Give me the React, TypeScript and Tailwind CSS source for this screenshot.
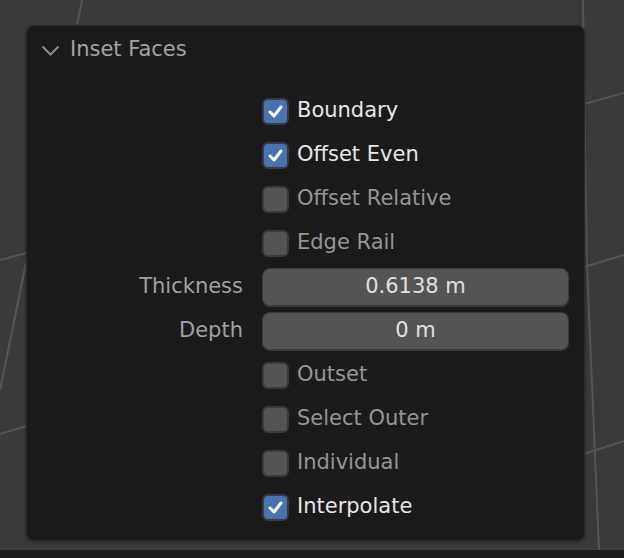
import React from 'react';

type Row =
  | { kind: 'check'; label: string; checked: boolean }
  | { kind: 'field'; label: string; value: string };

const rows: Row[] = [
  { kind: 'check', label: 'Boundary', checked: true },
  { kind: 'check', label: 'Offset Even', checked: true },
  { kind: 'check', label: 'Offset Relative', checked: false },
  { kind: 'check', label: 'Edge Rail', checked: false },
  { kind: 'field', label: 'Thickness', value: '0.6138 m' },
  { kind: 'field', label: 'Depth', value: '0 m' },
  { kind: 'check', label: 'Outset', checked: false },
  { kind: 'check', label: 'Select Outer', checked: false },
  { kind: 'check', label: 'Individual', checked: false },
  { kind: 'check', label: 'Interpolate', checked: true },
];

function Checkbox({ checked }: { checked: boolean }) {
  return (
    <div
      className={
        checked
          ? 'w-[27px] h-[27px] rounded-[6px] bg-[#4772b3] border-2 border-[#3a3a3a] flex items-center justify-center'
          : 'w-[27px] h-[27px] rounded-[6px] bg-[#545454] border-2 border-[#3a3a3a]'
      }
    >
      {checked && (
        <svg width="17" height="17" viewBox="0 0 17 17">
          <path d="M3 9 L7 13 L14 4" fill="none" stroke="#ffffff" strokeWidth="3" strokeLinecap="round" strokeLinejoin="round" />
        </svg>
      )}
    </div>
  );
}

export default function App() {
  return (
    <div
      className="relative w-[624px] h-[558px] overflow-hidden bg-[#3a3a3a] flex flex-col"
      style={{ fontFamily: '"DejaVu Sans", "Liberation Sans", sans-serif' }}
    >
      {/* viewport wireframe lines */}
      <svg className="absolute inset-0" width="624" height="558">
        <g stroke="#555555" strokeWidth="2" fill="none">
          <line x1="82" y1="0" x2="76" y2="30" />
          <line x1="0" y1="260" x2="30" y2="252" />
          <line x1="26" y1="263" x2="0" y2="390" />
          <line x1="0" y1="434" x2="30" y2="425" />
          <line x1="583" y1="0" x2="587" y2="270" />
          <line x1="587" y1="266" x2="599" y2="550" />
          <line x1="584" y1="104" x2="624" y2="93" />
          <line x1="584" y1="267" x2="624" y2="255" />
          <line x1="584" y1="454" x2="624" y2="441" />
        </g>
      </svg>

      <div className="relative pt-[25px] pl-[26px]">
        <div className="w-[559px] h-[516px] rounded-[8px] bg-[#1b1b1b] border border-[#2a2a2a] shadow-[0_1px_3px_rgba(0,0,0,0.4)] flex flex-col">
          <div className="h-[48px] flex items-center pl-[14px] gap-[10px] text-[21px] text-[#a3a3a3]">
            <svg width="19" height="11" viewBox="0 0 19 11">
              <path d="M1.5 1.5 L9.5 9.5 L17.5 1.5" fill="none" stroke="#8c8c8c" strokeWidth="2" />
            </svg>
            <span>Inset Faces</span>
          </div>
          <div className="pt-[15px] flex flex-col">
            {rows.map((r) => (
              <div key={r.label} className="h-[44px] flex items-center">
                <div className="w-[216px] text-right text-[21px] text-[#a0a0a0]">
                  {r.kind === 'field' ? r.label : ''}
                </div>
                <div className="ml-[19px] flex items-center">
                  {r.kind === 'check' ? (
                    <>
                      <Checkbox checked={r.checked} />
                      <span
                        className={
                          r.checked
                            ? 'ml-[8px] text-[21px] text-[#e6e6e6]'
                            : 'ml-[8px] text-[21px] text-[#959595]'
                        }
                      >
                        {r.label}
                      </span>
                    </>
                  ) : (
                    <div className="w-[307px] h-[39px] rounded-[8px] bg-[#545454] border border-[#3a3a3a] border-b-2 flex items-center justify-center text-[21px] text-[#e0e0e0]">
                      {r.value}
                    </div>
                  )}
                </div>
              </div>
            ))}
          </div>
        </div>
      </div>

      <div className="relative mt-auto h-[8px] bg-[#1d1d1d]" />
    </div>
  );
}
